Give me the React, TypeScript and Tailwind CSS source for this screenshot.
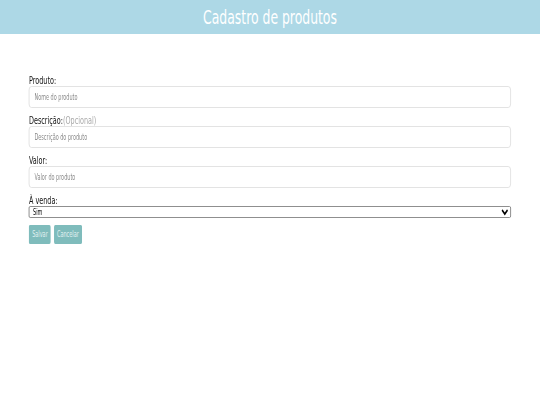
// The reference uses a very narrow condensed face; DejaVu Sans Condensed is
// squeezed horizontally to get the same text widths.
const font = { fontFamily: '"DejaVu Sans Condensed", "Liberation Sans Narrow", sans-serif' };

function Field({ label, hint, placeholder }: { label: string; hint?: string; placeholder: string }) {
  return (
    <div>
      <label className="block h-[12px] text-[10.5px] leading-[12px] text-[#111]">
        {label}
        {hint && <span className="text-[#aaa]">{hint}</span>}
      </label>
      <input
        placeholder={placeholder}
        className="block w-full h-[22px] px-[7px] text-[8px] border border-[#dedede] rounded-[4px] bg-white placeholder:text-[#8a8a8a] outline-none"
      />
    </div>
  );
}

export default function App() {
  return (
    <div className="min-h-screen w-[540px] bg-white overflow-hidden" style={font}>
      <header className="h-[34px] bg-[#add8e6] flex items-center justify-center">
        <h1 className="inline-block scale-x-[0.69] text-[20px] text-white">Cadastro de produtos</h1>
      </header>

      <form className="w-[790px] origin-left scale-x-[0.684] pl-[42.4px] pt-[40px]">
        <div className="w-[704.7px] flex flex-col gap-[6px]">
          <Field label="Produto:" placeholder="Nome do produto" />
          <Field label="Descrição:" hint="(Opcional)" placeholder="Descrição do produto" />
          <Field label="Valor:" placeholder="Valor do produto" />
          <div>
            <label className="block h-[12px] text-[10.5px] leading-[12px] text-[#111]">À venda:</label>
            <select className="block w-full h-[12px] px-[1px] text-[8px] leading-[9px] border border-[#7a7a7a] rounded-[2px] bg-white text-black">
              <option>Sim</option>
              <option>Não</option>
            </select>
          </div>
        </div>
        <div className="mt-[7px] flex gap-[4.4px]">
          <button type="button" className="h-[19px] w-[32px] bg-[#7fbcbc] text-[#e2f1f1] text-[8px] rounded-[2px]">
            Salvar
          </button>
          <button type="button" className="h-[19px] w-[41px] bg-[#7fbcbc] text-[#e2f1f1] text-[8px] rounded-[2px]">
            Cancelar
          </button>
        </div>
      </form>
    </div>
  );
}
